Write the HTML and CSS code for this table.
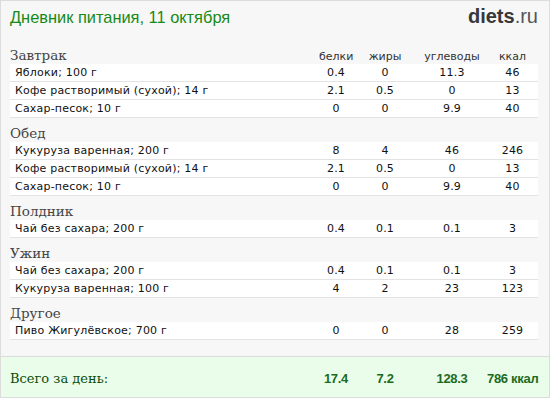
FILE: index.html
```html
<!DOCTYPE html>
<html lang="ru">
<head>
<meta charset="utf-8">
<title>Дневник питания</title>
<link rel="stylesheet" href="styles.css">
</head>
<body>
<div class="page">
  <div class="top">
    <div class="title">Дневник питания, 11 октября</div>
    <div class="logo"><b>diets</b>.ru</div>
  </div>
  <div class="diary">
    <div class="head grid">
      <div class="meal">Завтрак</div>
      <div class="lab">белки</div><div class="lab">жиры</div><div class="lab">углеводы</div><div class="lab">ккал</div>
    </div>
    <div class="row grid"><div class="name">Яблоки; 100 г</div><div>0.4</div><div>0</div><div>11.3</div><div>46</div></div>
    <div class="row grid"><div class="name">Кофе растворимый (сухой); 14 г</div><div>2.1</div><div>0.5</div><div>0</div><div>13</div></div>
    <div class="row grid"><div class="name">Сахар-песок; 10 г</div><div>0</div><div>0</div><div>9.9</div><div>40</div></div>

    <div class="head grid"><div class="meal">Обед</div></div>
    <div class="row grid"><div class="name">Кукуруза варенная; 200 г</div><div>8</div><div>4</div><div>46</div><div>246</div></div>
    <div class="row grid"><div class="name">Кофе растворимый (сухой); 14 г</div><div>2.1</div><div>0.5</div><div>0</div><div>13</div></div>
    <div class="row grid"><div class="name">Сахар-песок; 10 г</div><div>0</div><div>0</div><div>9.9</div><div>40</div></div>

    <div class="head grid"><div class="meal">Полдник</div></div>
    <div class="row grid"><div class="name">Чай без сахара; 200 г</div><div>0.4</div><div>0.1</div><div>0.1</div><div>3</div></div>

    <div class="head grid"><div class="meal">Ужин</div></div>
    <div class="row grid"><div class="name">Чай без сахара; 200 г</div><div>0.4</div><div>0.1</div><div>0.1</div><div>3</div></div>
    <div class="row grid"><div class="name">Кукуруза варенная; 100 г</div><div>4</div><div>2</div><div>23</div><div>123</div></div>

    <div class="head grid"><div class="meal">Другое</div></div>
    <div class="row grid"><div class="name">Пиво Жигулёвское; 700 г</div><div>0</div><div>0</div><div>28</div><div>259</div></div>
  </div>
  <div class="total grid">
    <div class="total-label">Всего за день:</div>
    <div>17.4</div><div>7.2</div><div>128.3</div><div class="kcal">786 ккал</div>
  </div>
</div>
</body>
</html>
```

FILE: styles.css
```css
html, body {
  margin: 0;
  padding: 0;
}

.page {
  width: 550px;
  height: 398px;
  box-sizing: border-box;
  border: 1px solid #dcdcdc;
  background: #f7f7f7;
  display: flex;
  flex-direction: column;
  overflow: hidden;
}

.top {
  height: 39px;
  box-sizing: border-box;
  padding: 4px 11px 0 9px;
  display: flex;
  justify-content: space-between;
  align-items: baseline;
}

.title {
  font-family: "Liberation Sans", Arial, sans-serif;
  font-size: 16.4px;
  color: #178a17;
}

.logo {
  font-family: "Liberation Sans", Arial, sans-serif;
  font-size: 20px;
  color: #555;
}

.logo b {
  color: #383838;
}

.diary {
  padding: 0 11px 0 9px;
}

.grid {
  display: grid;
  grid-template-columns: 1fr 34px 64px 70px 51px;
  align-items: baseline;
}

.head {
  height: 24px;
  box-sizing: border-box;
  padding-top: 7px;
  line-height: 17px;
}

.meal {
  font-family: "DejaVu Serif", Georgia, serif;
  font-size: 13.5px;
  color: #444;
}

.lab {
  font-family: "DejaVu Sans", Verdana, sans-serif;
  font-size: 11px;
  color: #333;
  text-align: center;
}

.row {
  height: 18px;
  box-sizing: border-box;
  background: #fff;
  border-bottom: 1px solid #e3e3e3;
  line-height: 17px;
  font-family: "DejaVu Sans", Verdana, sans-serif;
  font-size: 11px;
  letter-spacing: 0.2px;
  color: #111;
}

.row > div {
  text-align: center;
}

.row > .name {
  text-align: left;
  padding-left: 5px;
}

.total {
  margin-top: auto;
  height: 41px;
  box-sizing: border-box;
  border-top: 1px solid #dcdcdc;
  background: #eafdea;
  padding: 13px 11px 0 9px;
  font-family: "Liberation Sans", Arial, sans-serif;
  font-size: 13px;
  font-weight: bold;
  letter-spacing: -0.3px;
  color: #1d6b1d;
  line-height: 18px;
}

.total > div {
  text-align: center;
  white-space: nowrap;
}

.total > .kcal {
  text-align: right;
  padding-right: 4px;
}

.total > .total-label {
  text-align: left;
  font-family: "DejaVu Serif", Georgia, serif;
  font-size: 13px;
  font-weight: normal;
  letter-spacing: 0;
  color: #0b4d0b;
}
```
